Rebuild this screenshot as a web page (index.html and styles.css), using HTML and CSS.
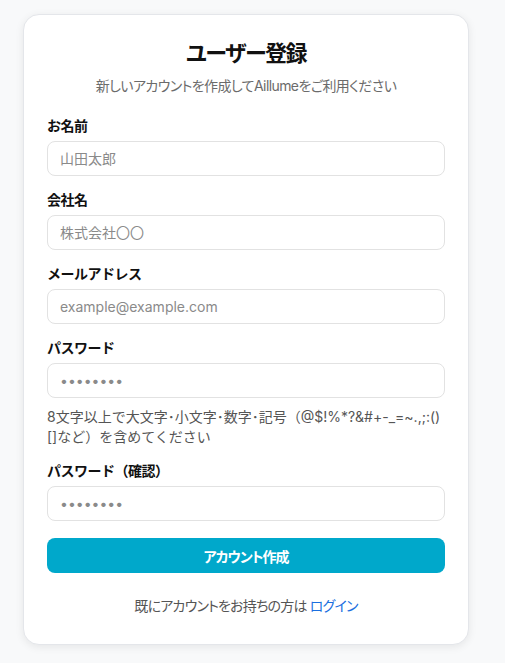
FILE: index.html
```html
<!DOCTYPE html>
<html lang="ja">
<head>
  <meta charset="UTF-8" />
  <meta name="viewport" content="width=device-width, initial-scale=1.0"/>
  <title>ユーザー登録 - Aillume</title>
  <link rel="stylesheet" href="styles.css">
</head>
<body>

  <div class="card">
    <div class="card-header">
      <h1>ユーザー登録</h1>
      <p>新しいアカウントを作成してAillumeをご利用ください</p>
    </div>

    <form class="register-form" onsubmit="return false;">
      <div class="field">
        <label for="name">お名前</label>
        <input type="text" id="name" placeholder="山田太郎">
      </div>

      <div class="field">
        <label for="company">会社名</label>
        <input type="text" id="company" placeholder="株式会社〇〇">
      </div>

      <div class="field">
        <label for="email">メールアドレス</label>
        <input type="email" id="email" placeholder="example@example.com">
      </div>

      <div class="field">
        <label for="password">パスワード</label>
        <input type="password" id="password" placeholder="••••••••">
        <p class="hint">8文字以上で大文字･小文字･数字･記号（@$!%*?&amp;#+-_=~.,;:()[]など）を含めてください</p>
      </div>

      <div class="field">
        <label for="password2">パスワード（確認）</label>
        <input type="password" id="password2" placeholder="••••••••">
      </div>

      <button type="submit">アカウント作成</button>
    </form>

    <p class="login-link">既にアカウントをお持ちの方は <a href="#">ログイン</a></p>
  </div>

</body>
</html>
```

FILE: styles.css
```css
body {
  font-family: Inter, "Noto Sans CJK JP", sans-serif;
  margin: 0;
  padding: 14px 0 20px 23px;
  background: #f8f9fa;
  color: #111;
}

/* 仮名を詰めて表示（見出し・ラベル・ボタン） */
h1, .card-header p, button, .login-link {
  font-feature-settings: "palt";
}

.card {
  width: 446px;
  box-sizing: border-box;
  background: white;
  border: 1px solid #e4e6ea;
  border-radius: 16px;
  padding: 23px 23px 28px;
  box-shadow: 0 2px 8px rgba(0,0,0,0.08);
}

.card-header {
  text-align: center;
  margin-bottom: 20px;
}

.card-header h1 {
  font-size: 22px;
  line-height: 30px;
  margin: 0;
  font-weight: bold;
  letter-spacing: -1.5px;
}

.card-header p {
  font-size: 14px;
  line-height: 20px;
  margin: 8px 0 0;
  color: #6b6b6b;
  letter-spacing: -0.6px;
}

.register-form {
  display: flex;
  flex-direction: column;
  gap: 14px;
}

.field {
  display: flex;
  flex-direction: column;
}

.field label {
  font-size: 14px;
  line-height: 20px;
  font-weight: bold;
  margin-bottom: 5px;
  letter-spacing: -0.5px;
}

.field input {
  height: 35px;
  box-sizing: border-box;
  border: 1px solid #e2e2e2;
  border-radius: 8px;
  padding: 0 12px;
  font-family: inherit;
  font-size: 14px;
  color: #333;
  outline: none;
}

.field input::placeholder {
  color: #8a8a8a;
}

.hint {
  font-size: 14px;
  line-height: 20px;
  margin: 9px 0 0;
  color: #555;
}

button {
  margin-top: 3px;
  height: 35px;
  background: #00a8cb;
  color: white;
  border: none;
  border-radius: 8px;
  font-family: inherit;
  font-size: 14px;
  font-weight: bold;
  letter-spacing: -1px;
  cursor: pointer;
}

button:hover {
  background: #0096b5;
}

.login-link {
  text-align: center;
  font-size: 14px;
  line-height: 20px;
  margin: 23px 0 0;
  color: #555;
  letter-spacing: -0.8px;
}

.login-link a {
  color: #1a6fe0;
  text-decoration: none;
}
```
